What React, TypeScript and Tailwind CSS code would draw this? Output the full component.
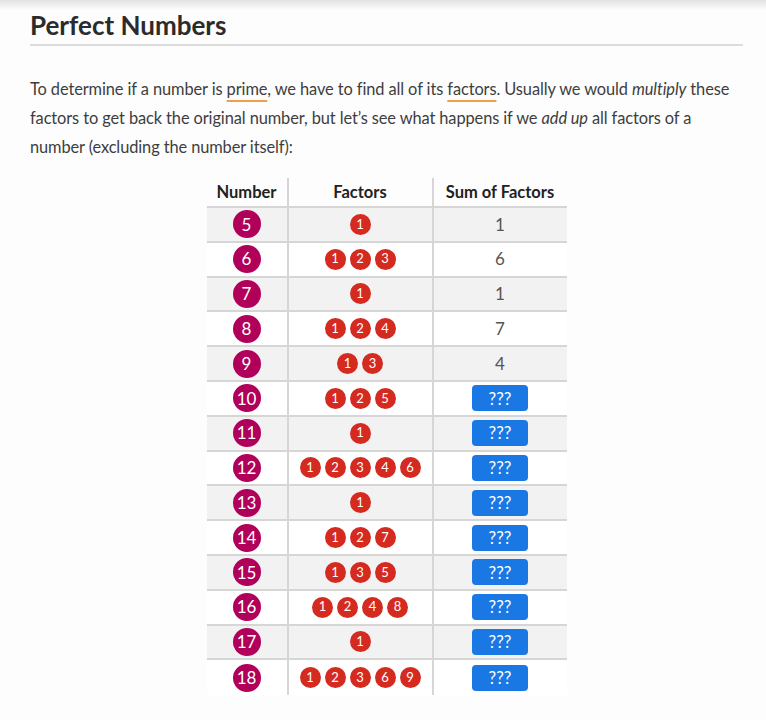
import React from "react";

const rows: { n: number; f: number[]; s: string | null }[] = [
  { n: 5, f: [1], s: "1" },
  { n: 6, f: [1, 2, 3], s: "6" },
  { n: 7, f: [1], s: "1" },
  { n: 8, f: [1, 2, 4], s: "7" },
  { n: 9, f: [1, 3], s: "4" },
  { n: 10, f: [1, 2, 5], s: null },
  { n: 11, f: [1], s: null },
  { n: 12, f: [1, 2, 3, 4, 6], s: null },
  { n: 13, f: [1], s: null },
  { n: 14, f: [1, 2, 7], s: null },
  { n: 15, f: [1, 3, 5], s: null },
  { n: 16, f: [1, 2, 4, 8], s: null },
  { n: 17, f: [1], s: null },
  { n: 18, f: [1, 2, 3, 6, 9], s: null },
];

const App: React.FC = () => {
  return (
    <div
      className="min-h-[720px] bg-[#fdfdfd] text-[#333]"
      style={{ fontFamily: "Lato, 'Open Sans', sans-serif" }}
    >
      <div className="h-[10px] bg-gradient-to-b from-[#e2e2e2] to-[#fdfdfd]" />
      <div className="pl-[30px] pr-[23px]">
        {/* Title */}
        <h1 className="border-b-2 border-[#dcdcdc] pb-[4px] text-[26px] font-bold leading-[30px] text-[#2b2b2b]">
          Perfect Numbers
        </h1>

        <p className="mt-[28px] text-[16.4px] leading-[29px] tracking-[-0.1px] text-[#3d3d3d]">
          To determine if a number is{" "}
          <span className="underline decoration-[#f0a04b] decoration-2 underline-offset-[5px]">prime</span>, we have
          to find all of its{" "}
          <span className="underline decoration-[#f0a04b] decoration-2 underline-offset-[5px]">factors</span>. Usually
          we would <em>multiply</em> these factors to get back the original number, but let’s see what happens if we{" "}
          <em>add up</em> all factors of a number (excluding the number itself):
        </p>

        {/* Table */}
        <div className="mx-auto mt-[17px] w-[360px] text-[16px]">
          <div className="grid h-[30px] grid-cols-[82px_145px_133px] items-center border-b-2 border-[#d6d6d6] text-[16.5px] font-bold text-[#222]">
            <div className="flex h-full items-center justify-center border-r-2 border-[#d6d6d6]">Number</div>
            <div className="flex h-full items-center justify-center border-r-2 border-[#d6d6d6]">Factors</div>
            <div className="flex h-full items-center justify-center">Sum of Factors</div>
          </div>
          {rows.map((r, i) => (
            <div
              key={r.n}
              className={`grid h-[34.8px] grid-cols-[82px_145px_133px] ${
                i < rows.length - 1 ? "border-b-2 border-[#d6d6d6]" : ""
              } ${i % 2 === 0 ? "bg-[#f2f2f2]" : "bg-white"}`}
            >
              <div className="flex items-center justify-center border-r-2 border-[#d6d6d6]">
                <span className="flex h-[28px] w-[28px] shrink-0 items-center justify-center rounded-full bg-[#b1005a] text-[17px] text-white">
                  {r.n}
                </span>
              </div>
              <div className="flex items-center justify-center gap-[4px] border-r-2 border-[#d6d6d6]">
                {r.f.map((f) => (
                  <span
                    key={f}
                    className="flex h-[21px] w-[21px] shrink-0 items-center justify-center rounded-full bg-[#d42a20] text-[13px] text-white"
                  >
                    {f}
                  </span>
                ))}
              </div>
              <div className="flex items-center justify-center text-[17px] text-[#555]">
                {r.s !== null ? (
                  r.s
                ) : (
                  <button className="flex h-[26px] w-[56px] items-center justify-center rounded-[4px] bg-[#1a78e4] text-[17px] text-white">
                    ???
                  </button>
                )}
              </div>
            </div>
          ))}
        </div>
      </div>
    </div>
  );
};

export default App;
